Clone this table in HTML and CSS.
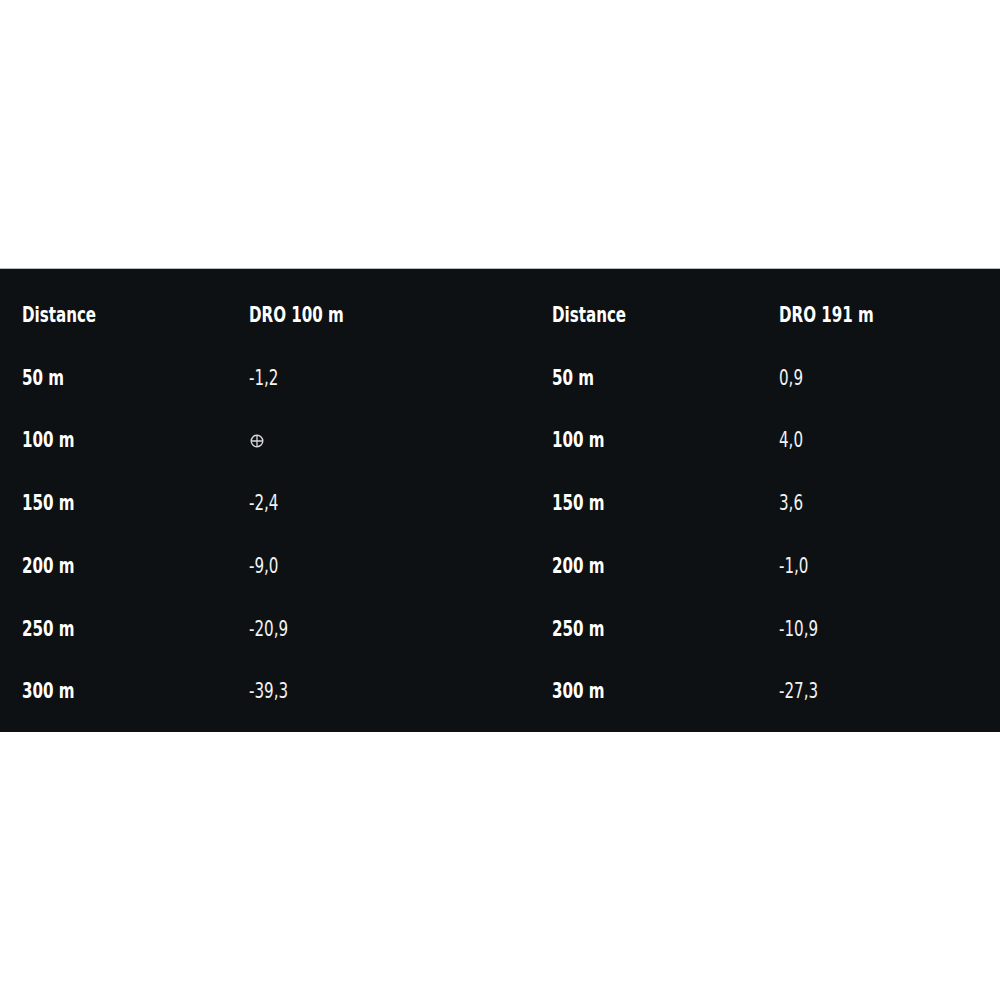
FILE: index.html
```html
<!DOCTYPE html>
<html lang="en">
<head>
<meta charset="utf-8">
<link rel="stylesheet" href="styles.css">
<title>DRO table</title>
</head>
<body>
<section class="band">
  <div class="half">
    <div class="row"><span class="cell head">Distance</span><span class="cell head">DRO 100 m</span></div>
    <div class="row"><span class="cell dist">50 m</span><span class="cell val">-1,2</span></div>
    <div class="row"><span class="cell dist">100 m</span><span class="cell sym" role="img" aria-label="zero"><svg class="zero" viewBox="0 0 14 14" width="14" height="14"><circle cx="7" cy="7" r="5.8" fill="none" stroke="#d6d8d9" stroke-width="1.4"/><path d="M7 1.5V12.5M1.5 7H12.5" stroke="#d6d8d9" stroke-width="1.3"/></svg></span></div>
    <div class="row"><span class="cell dist">150 m</span><span class="cell val">-2,4</span></div>
    <div class="row"><span class="cell dist">200 m</span><span class="cell val">-9,0</span></div>
    <div class="row"><span class="cell dist">250 m</span><span class="cell val">-20,9</span></div>
    <div class="row"><span class="cell dist">300 m</span><span class="cell val">-39,3</span></div>
  </div>
  <div class="half">
    <div class="row"><span class="cell head">Distance</span><span class="cell head">DRO 191 m</span></div>
    <div class="row"><span class="cell dist">50 m</span><span class="cell val">0,9</span></div>
    <div class="row"><span class="cell dist">100 m</span><span class="cell val">4,0</span></div>
    <div class="row"><span class="cell dist">150 m</span><span class="cell val">3,6</span></div>
    <div class="row"><span class="cell dist">200 m</span><span class="cell val">-1,0</span></div>
    <div class="row"><span class="cell dist">250 m</span><span class="cell val">-10,9</span></div>
    <div class="row"><span class="cell dist">300 m</span><span class="cell val">-27,3</span></div>
  </div>
</section>
</body>
</html>
```
FILE: styles.css
```css
html, body {
  margin: 0;
  padding: 0;
  background: #ffffff;
}
body {
  min-height: 100vh;
  display: flex;
  flex-direction: column;
  justify-content: center;
  font-family: "DejaVu Sans", "Liberation Sans", sans-serif;
  font-stretch: condensed;
  color: #ffffff;
}
.band {
  background: #0d1114;
  height: 464px;
  box-sizing: border-box;
  padding: 15px 0 10px 22px;
  display: grid;
  grid-template-columns: 530px 1fr;
  border-top: 1px solid #b9bbbc;
}
.half {
  display: flex;
  flex-direction: column;
}
.row {
  height: 62.75px;
  display: grid;
  grid-template-columns: 227px 1fr;
  align-items: center;
}
.cell {
  font-size: 21px;
  line-height: 1;
  white-space: nowrap;
  transform: scaleX(0.8);
  transform-origin: left center;
}
.head, .dist {
  font-weight: 700;
}
.val {
  font-weight: 400;
  color: #f2f3f3;
}
.sym {
  display: flex;
  align-items: center;
  transform: none;
  padding-left: 1px;
}
.zero {
  display: block;
}
```
